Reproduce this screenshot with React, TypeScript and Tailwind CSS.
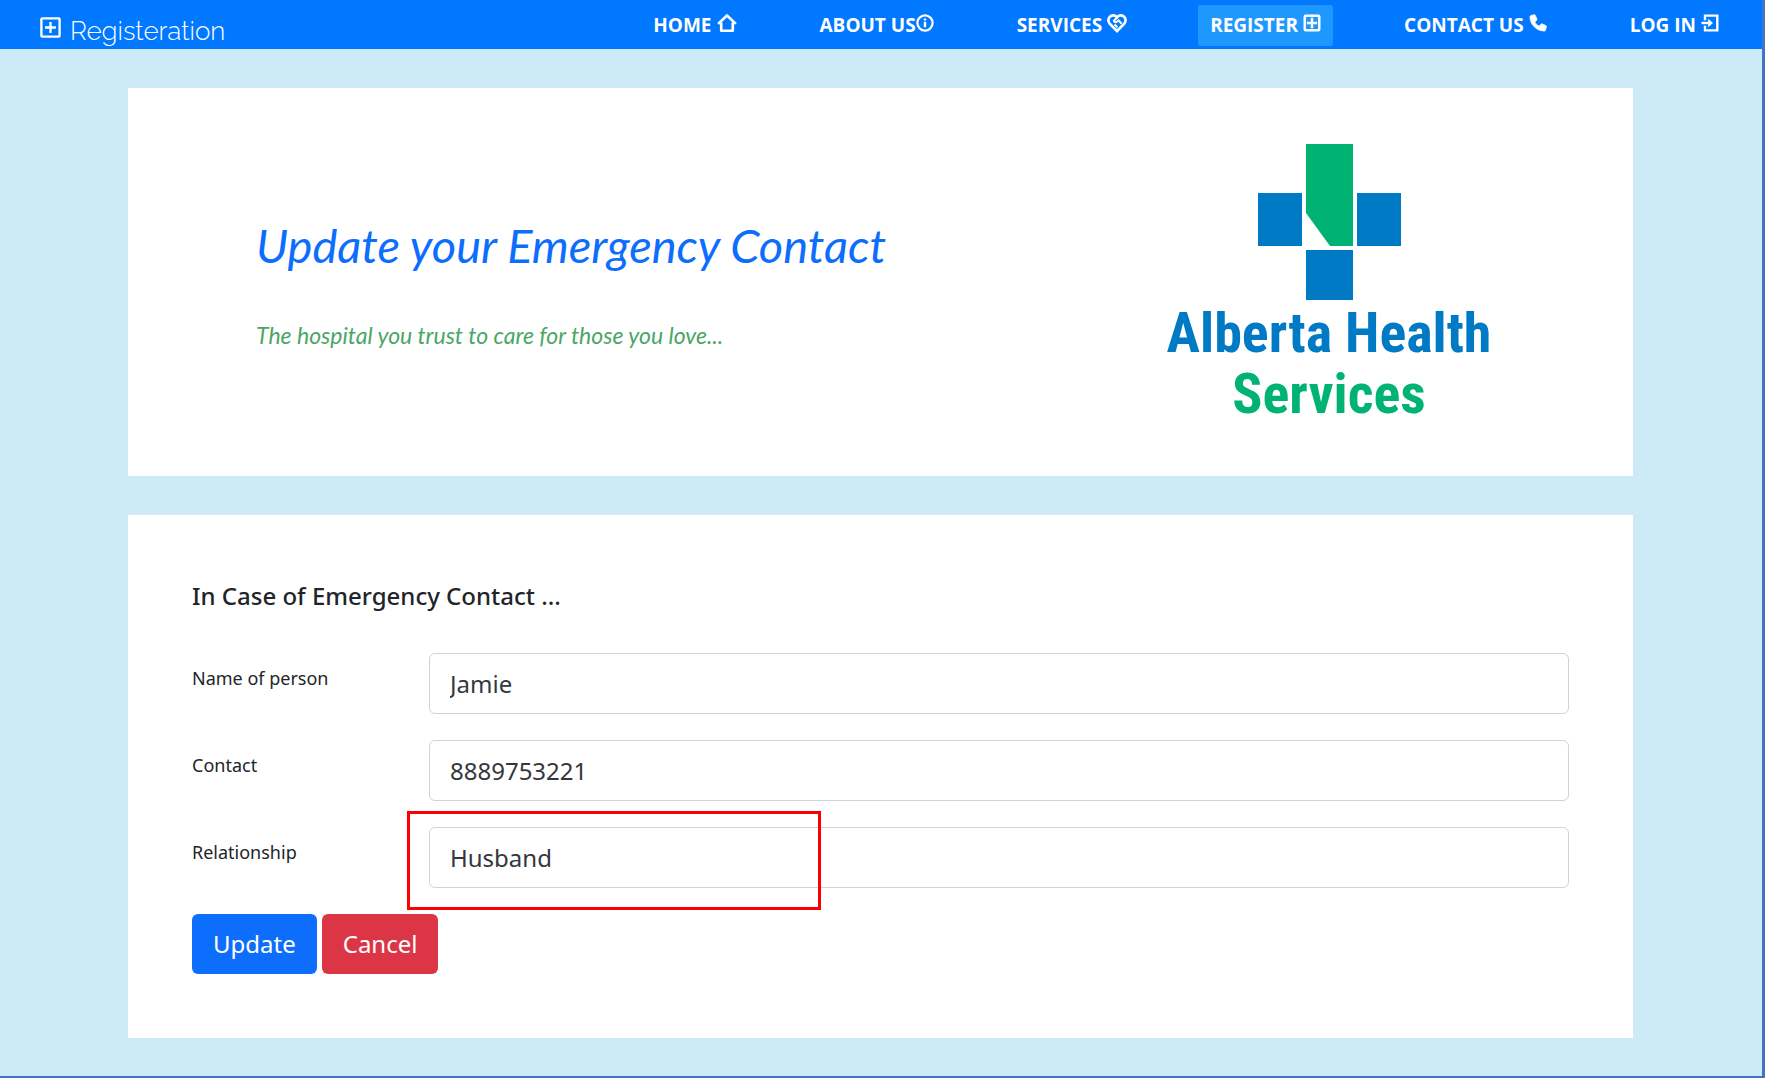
import React from "react";

type IconProps = { children: React.ReactNode; className?: string };

function Icon({ children, className = "size-[18px]" }: IconProps) {
  return (
    <svg
      viewBox="0 0 18 18"
      className={className}
      fill="none"
      stroke="currentColor"
      strokeWidth="2.4"
      aria-hidden="true"
    >
      {children}
    </svg>
  );
}

const HomeIcon = () => (
  <Icon className="size-5">
    <path d="M1 9.800 9 2.200l8 7.600M3.800 8.500v7.500h10.400V8.500" strokeLinejoin="round" />
  </Icon>
);

const InfoIcon = () => (
  <Icon>
    <circle cx="9" cy="9" r="7.600" strokeWidth="2.200" />
    <path d="M9 7.800v5.400M9 4.400v2.200" />
  </Icon>
);

const HeartIcon = () => (
  <Icon className="size-5">
    <path d="M9 16.200 2.400 9.600C.7 7.600.9 4.600 3 3.100c1.900-1.300 4.300-1 6 .8 1.700-1.800 4.100-2.100 6-.8 2.100 1.500 2.300 4.500.6 6.500L9 16.200Z" />
    <path d="M9.400 3.800 6.200 7c.4 1.500 2 1.700 3.200.5l1-.8 2.800 3M6.800 10.400l2.600 2.400" strokeWidth="1.800" />
  </Icon>
);

const TableIcon = () => (
  <Icon>
    <rect x="1.700" y="1.700" width="14.600" height="14.600" rx="1" />
    <path d="M9 3.800v10.400M3.800 9h10.400" />
  </Icon>
);

const PhoneIcon = () => (
  <Icon>
    <path
      d="M1.600 1.700 5.100.7c.5-.1.900.1 1.100.5l1.700 3.900c.2.4.1.8-.2 1.100L5.800 7.900c1 2 2.400 3.400 4.400 4.300l1.700-2c.3-.4.700-.4 1.100-.3l3.900 1.700c.4.200.6.600.5 1.100l-1 3.500c-.1.500-.5.800-1 .8C7.500 17 1 10.500 1 2.700c0-.5.200-.9.600-1Z"
      fill="currentColor"
      strokeWidth="0.800"
    />
  </Icon>
);

const LoginIcon = () => (
  <Icon>
    <path d="M4 6.200V1.600h12.300v14.800H4v-4.600" />
    <path d="M.5 9H9" />
    <path d="M7.200 4.800 12 9l-4.800 4.200Z" fill="currentColor" stroke="none" />
  </Icon>
);

const links = [
  { label: "HOME", icon: <HomeIcon />, gap: true },
  { label: "ABOUT US", icon: <InfoIcon />, gap: false },
  { label: "SERVICES", icon: <HeartIcon />, gap: true },
  { label: "REGISTER", icon: <TableIcon />, gap: true, active: true },
  { label: "CONTACT US", icon: <PhoneIcon />, gap: true },
  { label: "LOG IN", icon: <LoginIcon />, gap: true },
];

function NavBar() {
  return (
    <header className="flex h-[49px] items-center justify-between bg-[#0078ff] pl-10 pr-[31px] pt-[2px] text-white">
      <a href="#" className="flex items-center gap-[9px] font-['Raleway','Lato',sans-serif] text-[26px] font-light">
        <Icon className="mt-1 size-[21px]">
          <rect x="1.200" y="1.200" width="15.600" height="15.600" rx="0.800" strokeWidth="2" />
          <path d="M9 4.300v9.400M4.300 9h9.400" strokeWidth="2" />
        </Icon>
        <span className="pt-3">Registeration</span>
      </a>
      <nav className="flex gap-[59px] font-['Segoe_UI','Open_Sans',sans-serif] text-[19px] font-bold">
        {links.map((link) => (
          <a
            key={link.label}
            href="#"
            aria-current={link.active ? "page" : undefined}
            className={
              link.active
                ? "flex h-[41px] items-center gap-[5px] rounded-xs bg-[#1e98ff] px-3"
                : link.gap
                  ? "flex h-[41px] items-center gap-[5px] px-3"
                  : "flex h-[41px] items-center px-3"
            }
          >
            <span>{link.label}</span>
            <span className="pb-1.5">{link.icon}</span>
          </a>
        ))}
      </nav>
    </header>
  );
}

function Logo() {
  return (
    <svg
      viewBox="0 0 320 276"
      className="h-[276px] w-[320px] shrink-0 overflow-visible"
      role="img"
      aria-label="Alberta Health Services"
    >
      <path d="M136 0h47v102h-23l-24-33Z" fill="#00b373" />
      <path d="M88 49h44v53H88ZM187 49h44v53h-44ZM136 106h47v50h-47Z" fill="#007ac4" />
      <g
        textAnchor="middle"
        fontWeight="700"
        fontSize="56"
        fontFamily="'Roboto Condensed', Roboto, sans-serif"
      >
        <text x="159" y="208" fill="#007ac4">Alberta Health</text>
        <text x="159" y="269" fill="#00b373">Services</text>
      </g>
    </svg>
  );
}

type FieldProps = { id: string; label: string; value: string; marked?: boolean };

function Field({ id, label, value, marked }: FieldProps) {
  return (
    <div className="flex">
      <label htmlFor={id} className="w-[237px] shrink-0 pt-[11px] text-[18px] leading-7">
        {label}
      </label>
      <div className="relative flex-1">
        <input
          id={id}
          type="text"
          defaultValue={value}
          className="h-[61px] w-full rounded-md border border-[#ced4da] bg-white px-5 text-[24px] text-[#33383d] outline-none"
        />
        {marked && (
          <div className="pointer-events-none absolute -left-[22px] -top-4 h-[99px] w-[414px] border-[3px] border-[#ff0000]" />
        )}
      </div>
    </div>
  );
}

export default function App() {
  return (
    <div className="min-h-screen border-b-2 border-r-3 border-[#4472c4] bg-[#cdebf7] pb-[37px] font-['Segoe_UI','Noto_Sans',sans-serif] text-[#212529]">
      <NavBar />
      <main className="ml-32 mr-[129px] mt-[39px] flex flex-col gap-[39px]">
        <section className="flex items-center justify-between bg-white py-14 pl-32 pr-[143px]">
          <div className="flex flex-col gap-[43px] font-['Satisfy','Lato',cursive] italic">
            <h1 className="whitespace-nowrap text-[47px] leading-[62px] text-[#0d6efd]">
              Update your Emergency Contact
            </h1>
            <p className="whitespace-nowrap text-[23px] leading-8 text-[#4ba666]">
              The hospital you trust to care for those you love...
            </p>
          </div>
          <Logo />
        </section>

        <section className="bg-white p-16">
          <h2 className="mb-10 text-[24px] font-medium leading-[34px]">In Case of Emergency Contact ...</h2>
          <form className="flex flex-col gap-[26px]" onSubmit={(e) => e.preventDefault()}>
            <Field id="name" label="Name of person" value="Jamie" />
            <Field id="contact" label="Contact" value="8889753221" />
            <Field id="relationship" label="Relationship" value="Husband" marked />
            <div className="flex gap-[5px] text-[24px] text-white">
              <button type="submit" className="h-[60px] rounded-md bg-[#0d6efd] px-[21px]">Update</button>
              <button type="button" className="h-[60px] rounded-md bg-[#dc3545] px-[21px]">Cancel</button>
            </div>
          </form>
        </section>
      </main>
    </div>
  );
}
